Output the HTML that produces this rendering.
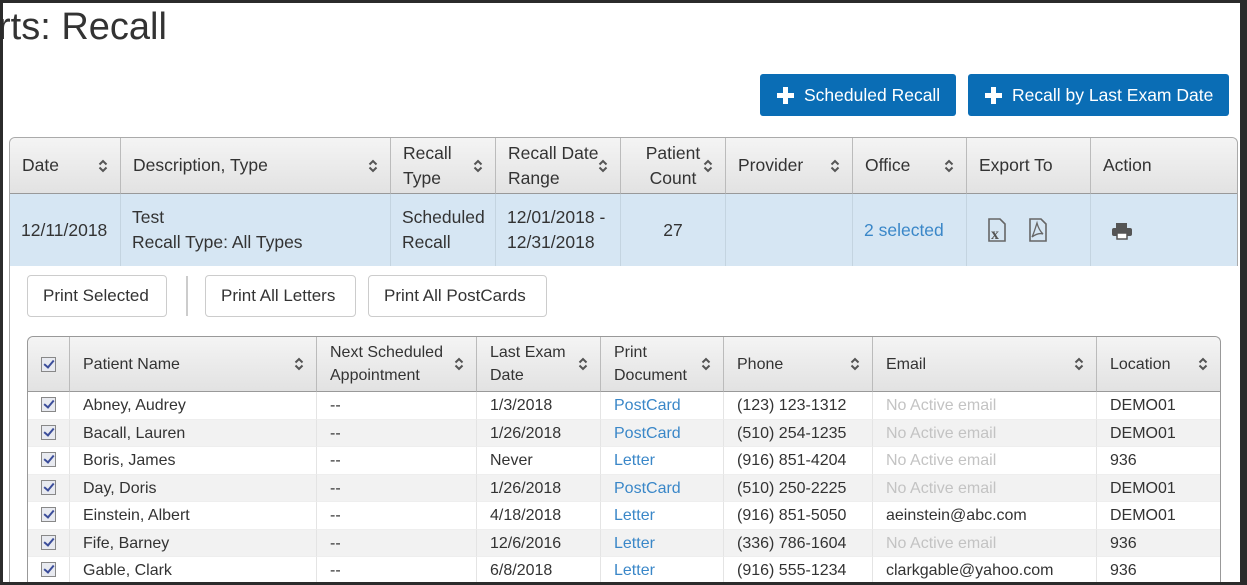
<!DOCTYPE html>
<html><head><meta charset="utf-8"><style>
*{box-sizing:border-box;margin:0;padding:0}
body{width:1247px;height:585px;overflow:hidden;background:#fff;font-family:"Liberation Sans",Arial,sans-serif;color:#333;position:relative;font-size:16px}
.frame{position:absolute;background:#2b2b2b}
h1{position:absolute;left:-2px;top:6px;font-weight:normal;font-size:38px;color:#333;white-space:nowrap}
.btn{position:absolute;top:74px;height:42px;background:#0a6db5;color:#fff;border-radius:3px;font-size:17.5px;line-height:42px;padding-left:44px;white-space:nowrap}
.btn:before{content:"";position:absolute;left:17px;top:13px;width:17px;height:17px;background:linear-gradient(#fff,#fff) center/17px 5px no-repeat,linear-gradient(#fff,#fff) center/5px 17px no-repeat}
table{border-collapse:separate;border-spacing:0;table-layout:fixed;position:absolute}
th{font-weight:normal;text-align:left;background:linear-gradient(#f4f4f4,#e2e2e2);border-right:1px solid #bbb;border-bottom:1px solid #999;position:relative;line-height:23px;vertical-align:middle;padding-left:12px}
th:last-child{border-right:none}
.sort{position:absolute;right:12px;top:50%;margin-top:-8px;width:10px;height:16px}
#t1{left:9px;top:137px;width:1229px;border:1px solid #aaa;border-radius:6px 6px 0 0;border-bottom:none;font-size:17.5px}
#t1 th{height:56px;line-height:25px}
#t1 th:first-child{border-top-left-radius:6px}
#t1 th:last-child{border-top-right-radius:6px}
#t1 td{background:#d6e6f3;height:72px;border-right:1px solid #c4d4e0;padding-left:11px;line-height:25px;vertical-align:middle}
#t1 td:last-child{border-right:none}
.link{color:#3a87c8}
.leftline{position:absolute;left:9px;top:265px;width:1px;height:320px;background:#aaa}
.pb{position:absolute;top:275px;height:42px;border:1px solid #ccc;border-radius:4px;line-height:40px;padding:0 15px;font-size:17px;white-space:nowrap;background:#fff}
#t2{left:27px;top:336px;width:1194px;border:1px solid #999;border-radius:6px 6px 0 0;border-bottom:none}
#t2 th{height:55px;padding-left:13px}
#t2 th:first-child{border-top-left-radius:6px;padding-left:0;text-align:center}
#t2 th:last-child{border-top-right-radius:6px}
#t2 td{height:27.5px;border-right:1px solid #e4e4e4;padding-left:13px;padding-top:2px;line-height:24.5px;white-space:nowrap;border-bottom:1px solid #eee;vertical-align:top}
#t2 td:first-child{padding-left:0;padding-top:0;text-align:center;vertical-align:middle}
#t2 td:last-child{border-right:none}
#t2 tbody tr:nth-child(odd) td{background:#fff}
#t2 tbody tr:nth-child(even) td{background:#f2f2f2}
.cb{display:inline-block;width:15px;height:15px;border:1px solid #888;background:#e8eaf0;vertical-align:middle;position:relative}
.cb:after{content:"";position:absolute;left:4px;top:0px;width:4px;height:8px;border:solid #3b4d9a;border-width:0 2px 2px 0;transform:rotate(40deg)}
.gray{color:#c3c3c3}
</style></head><body>
<h1>rts: Recall</h1>
<div class="btn" style="left:760px;width:196px">Scheduled Recall</div>
<div class="btn" style="left:968px;width:261px">Recall by Last Exam Date</div>

<svg width="0" height="0" style="position:absolute"><defs><symbol id="srt" viewBox="0 0 10 16"><path d="M1.5 6.5L5 3L8.5 6.5M1.5 9.5L5 13L8.5 9.5" fill="none" stroke="#555" stroke-width="2"/></symbol></defs></svg>

<table id="t1">
<colgroup><col style="width:111px"><col style="width:270px"><col style="width:105px"><col style="width:125px"><col style="width:105px"><col style="width:127px"><col style="width:114px"><col style="width:124px"><col></colgroup>
<thead><tr>
<th>Date<svg class="sort"><use href="#srt"/></svg></th>
<th>Description, Type<svg class="sort"><use href="#srt"/></svg></th>
<th>Recall<br>Type<svg class="sort"><use href="#srt"/></svg></th>
<th>Recall Date<br>Range<svg class="sort"><use href="#srt"/></svg></th>
<th style="text-align:center;padding-left:0">Patient<br>Count<svg class="sort"><use href="#srt"/></svg></th>
<th>Provider<svg class="sort"><use href="#srt"/></svg></th>
<th>Office<svg class="sort"><use href="#srt"/></svg></th>
<th>Export To</th>
<th>Action</th>
</tr></thead>
<tbody><tr>
<td>12/11/2018</td>
<td>Test<br>Recall Type: All Types</td>
<td>Scheduled<br>Recall</td>
<td>12/01/2018 -<br>12/31/2018</td>
<td style="text-align:center;padding-left:0">27</td>
<td></td>
<td class="link">2 selected</td>
<td><svg width="80" height="26" style="vertical-align:middle;margin-left:9px"><path d="M2 2h11l5 5v17H2z" fill="none" stroke="#666" stroke-width="1.6"/><text x="4" y="22" font-family="Liberation Serif" font-weight="bold" font-size="16" fill="#555">x</text><path d="M43 2h11l5 5v17H43z" fill="none" stroke="#666" stroke-width="1.6"/><path d="M50 6c-2 6-3 10-5 14c4-3 8-4 11-3c-3-3-5-7-6-11z" fill="none" stroke="#666" stroke-width="1.3"/></svg></td>
<td><svg width="24" height="22" style="vertical-align:middle;margin-left:8px"><rect x="6" y="3" width="11" height="5" fill="#555"/><rect x="2" y="8" width="20" height="8" rx="2" fill="#555"/><rect x="7" y="13" width="10" height="6" fill="#fff" stroke="#555" stroke-width="1.5"/></svg></td>
</tr></tbody></table>

<div class="leftline"></div>
<div class="pb" style="left:27px;width:140px">Print Selected</div>
<div style="position:absolute;left:186px;top:276px;width:2px;height:40px;background:#ccc"></div>
<div class="pb" style="left:205px;width:151px">Print All Letters</div>
<div class="pb" style="left:368px;width:179px">Print All PostCards</div>

<table id="t2">
<colgroup><col style="width:42px"><col style="width:247px"><col style="width:160px"><col style="width:124px"><col style="width:123px"><col style="width:149px"><col style="width:224px"><col></colgroup>
<thead><tr>
<th><span class="cb"></span></th>
<th>Patient Name<svg class="sort"><use href="#srt"/></svg></th>
<th>Next Scheduled<br>Appointment<svg class="sort"><use href="#srt"/></svg></th>
<th>Last Exam<br>Date<svg class="sort"><use href="#srt"/></svg></th>
<th>Print<br>Document<svg class="sort"><use href="#srt"/></svg></th>
<th>Phone<svg class="sort"><use href="#srt"/></svg></th>
<th>Email<svg class="sort"><use href="#srt"/></svg></th>
<th>Location<svg class="sort"><use href="#srt"/></svg></th>
</tr></thead>
<tbody>
<tr><td><span class="cb"></span></td><td>Abney, Audrey</td><td>--</td><td>1/3/2018</td><td class="link">PostCard</td><td>(123) 123-1312</td><td class="gray">No Active email</td><td>DEMO01</td></tr>
<tr><td><span class="cb"></span></td><td>Bacall, Lauren</td><td>--</td><td>1/26/2018</td><td class="link">PostCard</td><td>(510) 254-1235</td><td class="gray">No Active email</td><td>DEMO01</td></tr>
<tr><td><span class="cb"></span></td><td>Boris, James</td><td>--</td><td>Never</td><td class="link">Letter</td><td>(916) 851-4204</td><td class="gray">No Active email</td><td>936</td></tr>
<tr><td><span class="cb"></span></td><td>Day, Doris</td><td>--</td><td>1/26/2018</td><td class="link">PostCard</td><td>(510) 250-2225</td><td class="gray">No Active email</td><td>DEMO01</td></tr>
<tr><td><span class="cb"></span></td><td>Einstein, Albert</td><td>--</td><td>4/18/2018</td><td class="link">Letter</td><td>(916) 851-5050</td><td>aeinstein@abc.com</td><td>DEMO01</td></tr>
<tr><td><span class="cb"></span></td><td>Fife, Barney</td><td>--</td><td>12/6/2016</td><td class="link">Letter</td><td>(336) 786-1604</td><td class="gray">No Active email</td><td>936</td></tr>
<tr><td><span class="cb"></span></td><td>Gable, Clark</td><td>--</td><td>6/8/2018</td><td class="link">Letter</td><td>(916) 555-1234</td><td>clarkgable@yahoo.com</td><td>936</td></tr>
</tbody></table>

<div class="frame" style="left:0;top:0;width:1247px;height:3px"></div>
<div class="frame" style="left:0;top:0;width:3px;height:585px"></div>
<div class="frame" style="left:1240px;top:0;width:7px;height:585px"></div>
<div class="frame" style="left:0;top:582px;width:1247px;height:3px"></div>
</body></html>
